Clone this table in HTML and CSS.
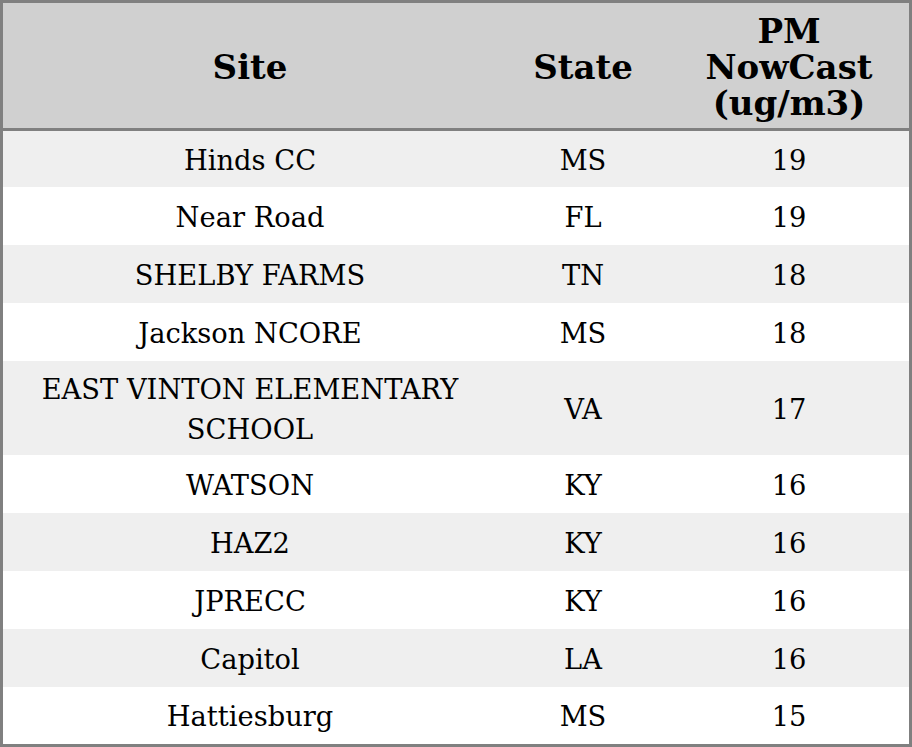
FILE: index.html
```html
<!DOCTYPE html>
<html>
<head>
<meta charset="utf-8">
<link rel="stylesheet" href="styles.css">
</head>
<body>
<div class="frame">
<table class="grid">
  <colgroup>
    <col class="c-site">
    <col class="c-state">
    <col class="c-pm">
  </colgroup>
  <thead>
    <tr><th>Site</th><th>State</th><th>PM NowCast (ug/m3)</th></tr>
  </thead>
  <tbody>
    <tr class="odd first"><td>Hinds CC</td><td>MS</td><td>19</td></tr>
    <tr><td>Near Road</td><td>FL</td><td>19</td></tr>
    <tr class="odd"><td>SHELBY FARMS</td><td>TN</td><td>18</td></tr>
    <tr><td>Jackson NCORE</td><td>MS</td><td>18</td></tr>
    <tr class="odd"><td>EAST VINTON ELEMENTARY SCHOOL</td><td>VA</td><td>17</td></tr>
    <tr><td>WATSON</td><td>KY</td><td>16</td></tr>
    <tr class="odd"><td>HAZ2</td><td>KY</td><td>16</td></tr>
    <tr><td>JPRECC</td><td>KY</td><td>16</td></tr>
    <tr class="odd"><td>Capitol</td><td>LA</td><td>16</td></tr>
    <tr class="last"><td>Hattiesburg</td><td>MS</td><td>15</td></tr>
  </tbody>
</table>
</div>
</body>
</html>
```

FILE: styles.css
```css
html, body {
  margin: 0;
  padding: 0;
  background: #ffffff;
}
.frame {
  width: 912px;
  height: 747px;
  box-sizing: border-box;
  border: 3px solid #808080;
  overflow: hidden;
}
.grid {
  width: 906px;
  border-collapse: separate;
  border-spacing: 0;
  table-layout: fixed;
  font-family: "DejaVu Serif", serif;
  color: #000;
}
.c-site { width: 494px; }
.c-state { width: 172px; }
.c-pm { width: 240px; }
.grid th {
  background: #d0d0d0;
  font-size: 34px;
  font-weight: bold;
  line-height: 36px;
  padding: 10px 10px 7px;
  height: 108px;
  border-bottom: 3px solid #808080;
  text-align: center;
  vertical-align: middle;
}
.grid td {
  font-size: 27.3px;
  line-height: 40px;
  padding: 8.5px 12px 5.5px;
  height: 44px;
  text-align: center;
  vertical-align: middle;
}
.grid tr.odd td { background: #efefef; }
.grid tr.first td { height: 42px; }
.grid tr.last td { height: 43px; }
```
